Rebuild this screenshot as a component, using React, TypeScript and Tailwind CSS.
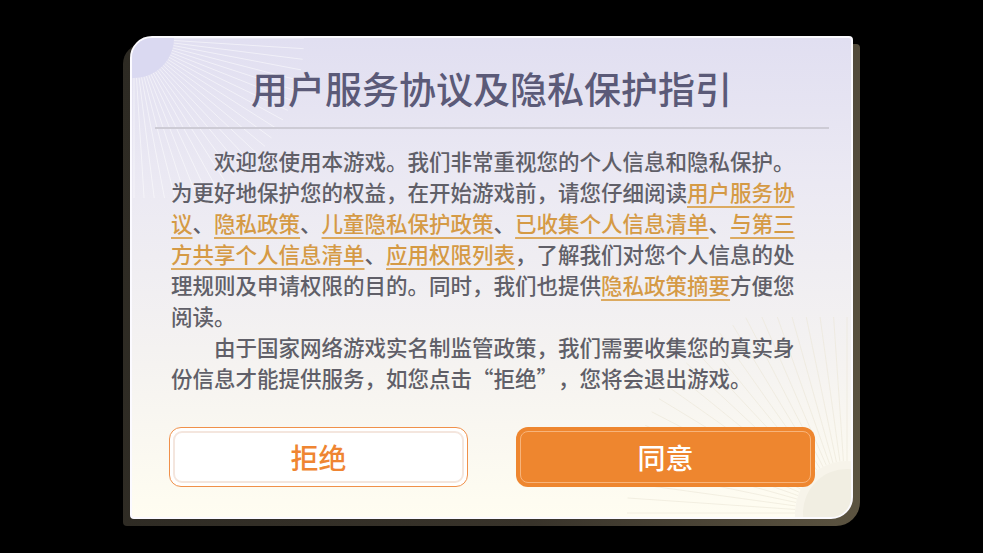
import React from "react";

const font = { fontFamily: '"Noto Sans CJK SC", "Noto Sans", sans-serif' };

function Link({ children }: { children: React.ReactNode }) {
  return (
    <span className="text-[#d59a45] underline decoration-2 decoration-[#dcaa60] underline-offset-[5px]">{children}</span>
  );
}

function Rays({ cx, cy, r0, r1, count, from, to, color }: { cx: number; cy: number; r0: number; r1: number; count: number; from: number; to: number; color: string }) {
  const lines = [];
  for (let i = 0; i < count; i++) {
    const a = ((from + ((to - from) * i) / (count - 1)) * Math.PI) / 180;
    lines.push(
      <line key={i} x1={cx + Math.cos(a) * r0} y1={cy + Math.sin(a) * r0} x2={cx + Math.cos(a) * r1} y2={cy + Math.sin(a) * r1} stroke={color} strokeWidth="1" />
    );
  }
  return <>{lines}</>;
}

export default function App() {
  return (
    <div className="h-[553px] w-[983px] overflow-hidden bg-black pl-[130px] pt-[36px] [text-spacing-trim:space-all]" style={font} lang="zh-CN">
      <div className="relative h-[483px] w-[723px]">
        {/* dark backing */}
        <div className="absolute -bottom-[7px] -left-[7px] -right-[7px] top-[8px] rounded-br-[24px] rounded-bl-[4px] rounded-tr-[4px] rounded-tl-[20px] bg-[linear-gradient(100deg,#2d2a23_0%,#38332a_60%,#5c5441_100%)]" />
        <div className="relative flex h-full w-full flex-col items-center overflow-hidden rounded-tl-[22px] rounded-tr-[4px] rounded-bl-[4px] rounded-br-[22px] border-2 border-[#fbfaff] bg-[linear-gradient(180deg,#e1dff1_0%,#ebe9f3_30%,#f4f2f1_65%,#fffdf1_100%)]">
          <svg className="pointer-events-none absolute left-0 top-0" width="200" height="160">
            <Rays cx={2} cy={0} r0={40} r1={170} count={26} from={0} to={90} color="rgba(255,255,255,0.5)" />
            <circle cx="2" cy="0" r="40" fill="#dad9f1" />
          </svg>
          <svg className="pointer-events-none absolute bottom-0 right-0" width="240" height="200">
            <Rays cx={236} cy={196} r0={52} r1={220} count={24} from={180} to={270} color="rgba(235,230,215,0.6)" />
            <circle cx="236" cy="196" r="52" fill="#f7f4ea" />
            <circle cx="236" cy="196" r="44" fill="#f1eee2" />
          </svg>

          <h1 className="relative mt-[26px] text-[37px] font-medium leading-[49px] text-[#5b5a78]">用户服务协议及隐私保护指引</h1>
          <div className="relative mt-[14px] h-[2px] w-[674px] bg-[#cdcbd5]" />

          <div className="relative ml-[39px] mt-[16px] w-[626px] self-start text-[21.5px] font-medium leading-[31px] text-[#605f68]">
            <p className="indent-[2em]">
              欢迎您使用本游戏。我们非常重视您的个人信息和隐私保护。为更好地保护您的权益，在开始游戏前，请您仔细阅读<Link>用户服务协议</Link>、<Link>隐私政策</Link>、<Link>儿童隐私保护政策</Link>、<Link>已收集个人信息清单</Link>、<Link>与第三方共享个人信息清单</Link>、<Link>应用权限列表</Link>，了解我们对您个人信息的处理规则及申请权限的目的。同时，我们也提供<Link>隐私政策摘要</Link>方便您阅读。
            </p>
            <p className="indent-[2em]">由于国家网络游戏实名制监管政策，我们需要收集您的真实身份信息才能提供服务，如您点击“拒绝”，您将会退出游戏。</p>
          </div>

          <div className="relative mt-[34px] flex w-full gap-[48px] pl-[37px]">
            <button className="h-[60px] w-[299px] rounded-[12px] border-[1.5px] border-[#f0904a] bg-white p-[3px]">
              <span className="flex h-full w-full items-center justify-center rounded-[9px] border-2 border-[#f4e6de] text-[28px] font-medium text-[#ef8532]">拒绝</span>
            </button>
            <button className="h-[60px] w-[299px] rounded-[12px] bg-[#ee862f] p-[4px]">
              <span className="flex h-full w-full items-center justify-center rounded-[8px] border-[1.5px] border-[#f7b47b] text-[28px] font-medium text-white">同意</span>
            </button>
          </div>
        </div>
      </div>
    </div>
  );
}
